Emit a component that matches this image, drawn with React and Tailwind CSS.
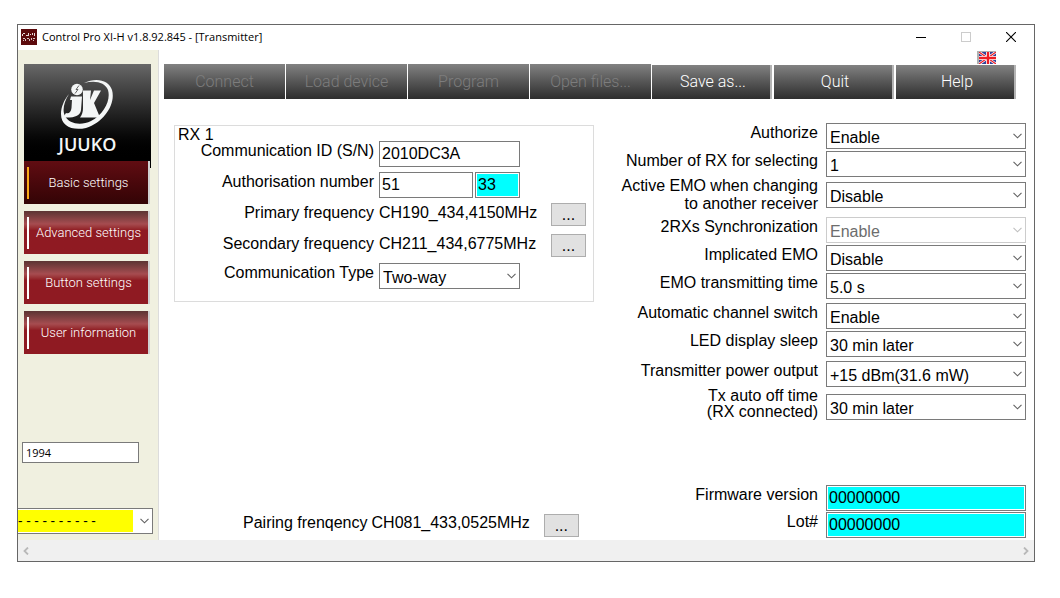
import React from "react";

const navItems = ["Basic settings", "Advanced settings", "Button settings", "User information"];

const toolbar = [
  { label: "Connect", disabled: true },
  { label: "Load device", disabled: true },
  { label: "Program", disabled: true },
  { label: "Open files...", disabled: true },
  { label: "Save as..." },
  { label: "Quit" },
  { label: "Help" },
];

const settings = [
  { id: "authorize", lines: ["Authorize"], value: "Enable", row: "items-start leading-5" },
  { id: "rx-count", lines: ["Number of RX for selecting"], value: "1", row: "mt-0.5 items-start leading-5" },
  {
    id: "active-emo",
    lines: ["Active EMO when changing", "to another receiver"],
    value: "Disable",
    row: "items-center leading-[18px]",
  },
  {
    id: "sync",
    lines: ["2RXs Synchronization"],
    value: "Enable",
    row: "mt-1 items-start leading-5",
    disabled: true,
  },
  { id: "implicated", lines: ["Implicated EMO"], value: "Disable", row: "mt-0.5 items-start leading-5" },
  { id: "emo-time", lines: ["EMO transmitting time"], value: "5.0 s", row: "mt-0.5 items-start leading-5" },
  { id: "channel", lines: ["Automatic channel switch"], value: "Enable", row: "mt-1 items-start leading-5" },
  { id: "led", lines: ["LED display sleep"], value: "30 min later", row: "mt-0.5 items-start leading-5" },
  {
    id: "power",
    lines: ["Transmitter power output"],
    value: "+15 dBm(31.6 mW)",
    row: "mt-1 items-start leading-5",
  },
  {
    id: "auto-off",
    lines: ["Tx auto off time", "(RX connected)"],
    value: "30 min later",
    row: "mt-px items-end leading-4",
  },
];

function Chevron({ className }) {
  return (
    <svg
      viewBox="0 0 9 6"
      className={`pointer-events-none absolute right-1 top-1/2 h-1.5 w-[9px] -translate-y-1/2 ${className}`}
      fill="none"
      stroke="currentColor"
      strokeWidth="1.1"
    >
      <path d="M0.5 0.8 4.5 4.8 8.5 0.8" />
    </svg>
  );
}

function Select({ id, value, disabled, className }) {
  return (
    <div className={`relative ${className}`}>
      <select
        id={id}
        disabled={disabled}
        defaultValue={value}
        className="block h-[26px] w-full appearance-none border border-[#7a7a7a] bg-white pl-[3px] pr-4 pt-0.5 text-base leading-6 text-black disabled:border-[#cccccc] disabled:text-[#6d6d6d] disabled:opacity-100"
      >
        <option>{value}</option>
      </select>
      <Chevron className={disabled ? "text-[#bfbfbf]" : "text-[#606060]"} />
    </div>
  );
}

function DotsButton({ label }) {
  return (
    <button
      aria-label={label}
      className="h-[23px] w-[35px] shrink-0 border border-[#adadad] bg-[#e1e1e1] leading-5"
    >
      ...
    </button>
  );
}

function Logo() {
  return (
    <div className="flex h-[104px] flex-col items-center bg-linear-to-b from-[#686868] to-black to-94% pt-3">
      <svg viewBox="0 0 60 54" className="h-[54px] w-[60px]" fill="#f4f6f6">
        {/* orbit ring, thicker at the lower right */}
        <path
          fillRule="evenodd"
          d="M26 7C38 1 51 4 54 14C58 28 46 46 28 52C14 55 3 50 3 38C3 31 6 24 11 18C6 26 4 34 7 40C11 48 23 50 33 45C46 38 53 24 50 14C47 6 37 4 26 7Z"
        />
        <circle cx="19" cy="13.5" r="5.8" />
        <path d="M21 9.500 18 13.500H20L17 17.500" fill="none" stroke="#555" strokeWidth="0.9" />
        <path d="M13 20.500H24L23 34C22 40 17 42 5 41.500L8 37C11 38 13 36 13.500 32L14 24H12Z" />
        <path d="M25 14.500H33L32 24L36 14.500H43L36 27 42 41.500H22C24 39 25 36 25 32Z" />
      </svg>
      <span className="pt-1 font-['Open_Sans',sans-serif] text-lg font-semibold leading-5 text-[#f4f6f6]">JUUKO</span>
    </div>
  );
}

function Flag() {
  return (
    <svg viewBox="0 0 17 12" className="h-3 w-[17px]">
      <rect width="17" height="12" fill="#33419a" />
      <path d="M0 0 17 12M17 0 0 12" stroke="#fff" strokeWidth="2.6" />
      <path d="M0 0 17 12M17 0 0 12" stroke="#ed1c24" strokeWidth="1.2" />
      <path d="M9 0V12M0 6H17" stroke="#fff" strokeWidth="4" />
      <path d="M9 0V12M0 6H17" stroke="#ed1c24" strokeWidth="2.4" />
    </svg>
  );
}

function TitleBar() {
  return (
    <header className="flex h-[25px] items-center pb-px pl-[3px] pr-[18px] font-['Open_Sans',sans-serif] text-[11px]">
      <svg viewBox="0 0 16 16" className="mr-[5px] size-4">
        <rect width="16" height="16" fill="#5c0a0c" />
        <path d="M2 4.500H4M1.500 5V7M5 6.500H7M7.500 4V7M9 5.500H10M11.500 4V6M13 6.500H14M13.500 4V6" stroke="#e8dada" />
        <path d="M2 9.500H4M4.500 10V12M2 11.500H3M6 9.500H8M8.500 10V12M10.500 9V11M12 9.500H14M12 11.500H13" stroke="#d8c4c4" />
      </svg>
      <h1 className="flex-1">Control Pro XI-H v1.8.92.845 - [Transmitter]</h1>
      <div className="flex items-center gap-[35px]">
        <button aria-label="Minimize" className="h-px w-2.5 bg-black" />
        <button aria-label="Maximize" className="size-2.5 border border-[#cccccc]" disabled />
        <button aria-label="Close" className="size-2.5">
          <svg viewBox="0 0 10 10" className="size-2.5" stroke="#000" strokeWidth="1.1">
            <path d="M0 0 10 10M10 0 0 10" />
          </svg>
        </button>
      </div>
    </header>
  );
}

function Sidebar() {
  return (
    <aside className="flex w-[141px] shrink-0 flex-col border-r border-[#dcdcdc] bg-[#f0f0e0] pt-3.5">
      <div className="ml-1.5 mr-[7px]">
        <Logo />
      </div>
      <nav className="-mt-[7px] ml-1.5 flex w-[126px] flex-col gap-[7px] font-['Roboto',sans-serif] text-[13px] font-light text-white">
        {navItems.map((item, i) => (
          <button
            key={item}
            className={`flex h-[43px] items-center border-r-2 border-[#d0d0d0] pl-[3px] ${
              i === 0
                ? "bg-linear-to-b from-[#610d12] to-[#330406]"
                : "bg-linear-to-b from-[#5c3434] via-[#a64c50] via-30% to-[#8f1a22] to-45%"
            }`}
          >
            <span className={`h-8 w-0.5 ${i === 0 ? "bg-[#fbab18]" : "bg-white"}`} />
            <span className="flex-1 whitespace-nowrap text-center">{item}</span>
          </button>
        ))}
      </nav>
      <div className="mb-1.5 mt-auto pt-[88px] font-['Open_Sans',sans-serif] text-[11px]">
        <input
          aria-label="Password"
          defaultValue="1994"
          className="ml-1 block h-[21px] w-[117px] border border-[#7a7a7a] bg-white px-[3px]"
        />
        <div className="relative mr-[5px] mt-[45px]">
          <select
            aria-label="Device"
            className="block h-[26px] w-full appearance-none border border-l-0 border-[#7a7a7a] bg-linear-to-r from-[#ffff00] from-86% to-white to-86% text-sm leading-6 shadow-[inset_0_1px_0_#fff,inset_0_-1px_0_#fff]"
          >
            <option>- - - - - - - - - -</option>
          </select>
          <Chevron className="text-[#606060]" />
        </div>
      </div>
    </aside>
  );
}

function Field({ id, label, className, children }) {
  return (
    <div className={`flex items-start gap-[5px] leading-5 ${className}`}>
      <label htmlFor={id} className="w-[199px] shrink-0 text-right">
        {label}
      </label>
      {children}
    </div>
  );
}

function ReceiverPanel() {
  return (
    <section className="h-[177px] border border-[#dcdcdc]">
      <h2 className="h-[15px] pl-[3px] leading-[18px]">RX 1</h2>
      <Field id="sn" label="Communication ID (S/N)" className="h-[31px]">
        <input id="sn" defaultValue="2010DC3A" className="h-[26px] w-[141px] border border-[#7a7a7a] px-0.5" />
      </Field>
      <Field id="auth" label="Authorisation number" className="h-[31px]">
        <div className="flex w-[141px] gap-0.5">
          <input id="auth" defaultValue="51" className="h-[26px] w-[94px] border border-[#7a7a7a] px-0.5" />
          <input
            aria-label="Authorisation check"
            defaultValue="33"
            readOnly
            className="h-[26px] w-[45px] border border-[#7a7a7a] bg-[#00ffff] px-0.5 ring-1 ring-inset ring-white"
          />
        </div>
      </Field>
      <Field label="Primary frequency" className="h-[31px]">
        <span className="flex-1">CH190_434,4150MHz</span>
        <div className="pr-[7px]">
          <DotsButton label="Choose primary frequency" />
        </div>
      </Field>
      <Field label="Secondary frequency" className="h-[29px]">
        <span className="flex-1">CH211_434,6775MHz</span>
        <div className="pr-[7px]">
          <DotsButton label="Choose secondary frequency" />
        </div>
      </Field>
      <Field id="comm-type" label="Communication Type">
        <Select id="comm-type" value="Two-way" className="w-[141px]" />
      </Field>
    </section>
  );
}

function ReadOnlyField({ id, label }) {
  return (
    <div className="flex items-start justify-end gap-2 leading-5">
      <label htmlFor={id}>{label}</label>
      <input
        id={id}
        defaultValue="00000000"
        readOnly
        className="h-[26px] w-[200px] border border-[#7a7a7a] bg-[#00ffff] px-0.5 ring-1 ring-inset ring-white"
      />
    </div>
  );
}

export default function App() {
  return (
    <div className="bg-white pb-9 pl-[17px] pr-[25px] pt-6 font-['Liberation_Sans',Arial,sans-serif] text-base text-black">
      <div className="border border-[#666666]">
        <TitleBar />
        <div className="flex">
          <Sidebar />
          <main className="flex min-w-0 flex-1 flex-col">
            <div className="flex h-3.5 items-start justify-end pr-[38px] pt-px">
              <button aria-label="Language" className="border-l-2 border-t border-[#b0b0b0]">
                <Flag />
              </button>
            </div>
            <div className="grid grid-cols-7 gap-px pl-[5px] pr-[17px] font-['Roboto',sans-serif] text-base font-light">
              {toolbar.map(({ label, disabled }) => (
                <button
                  key={label}
                  disabled={disabled}
                  className={`bg-linear-to-b from-[#828282] to-[#2e2e2e] ${
                    disabled
                      ? "h-[35px] text-[#7d7d7d]"
                      : "mr-px mt-px h-[34px] border-r-2 border-[#b4b4b4] pl-1 text-white"
                  }`}
                >
                  {label}
                </button>
              ))}
            </div>

            <div className="flex flex-1 justify-between pb-0.5 pl-[15px] pr-2 pt-6">
              <div className="flex w-[420px] flex-col justify-between pb-px pt-0.5">
                <ReceiverPanel />
                <div className="flex items-start pl-[69px]">
                  <span className="leading-[18px]">Pairing frenqency</span>
                  <span className="ml-1 mr-3.5 leading-[18px]">CH081_433,0525MHz</span>
                  <DotsButton label="Choose pairing frequency" />
                </div>
              </div>

              <div className="flex flex-col">
                {settings.map(({ id, lines, value, row, disabled }) => (
                  <div key={id} className={`flex justify-end gap-2 ${row}`}>
                    <label htmlFor={id} className="text-right">
                      {lines.map((line) => (
                        <span key={line} className="block">
                          {line}
                        </span>
                      ))}
                    </label>
                    <Select id={id} value={value} disabled={disabled} className="w-[200px]" />
                  </div>
                ))}
                <div className="mt-auto flex flex-col gap-px pt-[65px]">
                  <ReadOnlyField id="firmware" label="Firmware version" />
                  <ReadOnlyField id="lot" label="Lot#" />
                </div>
              </div>
            </div>
          </main>
        </div>
        <div className="flex h-[21px] items-center justify-between bg-[#f0f0f0] px-[5px] text-[#b8b8b8]">
          <svg viewBox="0 0 6 8" className="h-2 w-1.5" fill="none" stroke="currentColor" strokeWidth="1.8">
            <path d="M5 0.500 1.500 4 5 7.500" />
          </svg>
          <svg viewBox="0 0 6 8" className="h-2 w-1.5" fill="none" stroke="currentColor" strokeWidth="1.8">
            <path d="M1 0.500 4.500 4 1 7.500" />
          </svg>
        </div>
      </div>
    </div>
  );
}
